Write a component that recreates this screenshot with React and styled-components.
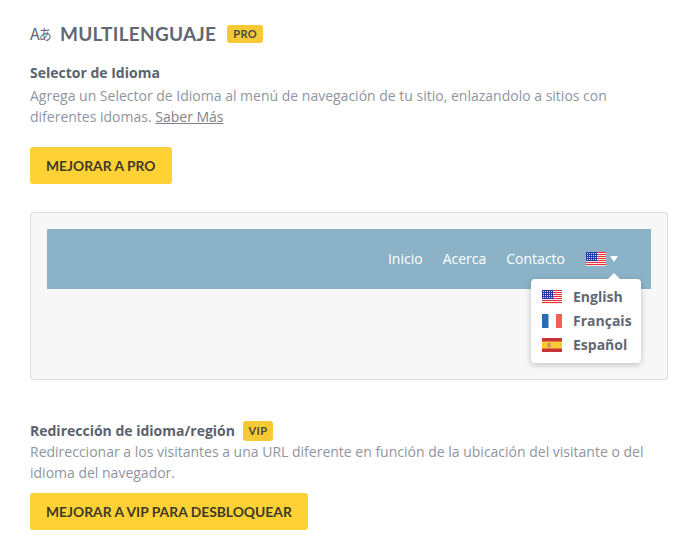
import React from 'react';
import styled, { createGlobalStyle } from 'styled-components';

const GlobalStyle = createGlobalStyle`
  html, body {
    margin: 0;
    background: #fff;
    font-family: "Open Sans", "Noto Sans", sans-serif;
  }
`;

const Page = styled.div`
  width: 693px;
  height: 550px;
  box-sizing: border-box;
  padding: 22px 25px 0 30px;
  overflow: hidden;
`;

const Header = styled.div`
  display: flex;
  align-items: center;
  height: 23px;
  margin-bottom: 18px;
`;

const Translate = styled.span`
  display: flex;
  align-items: baseline;
  width: 30px;
  color: #5f6873;
  font-size: 16px;
  line-height: 23px;
  font-family: "Noto Sans CJK JP", "Open Sans", sans-serif;
  & > small {
    font-size: 13px;
    position: relative;
    top: -1px;
    margin-left: -1px;
    transform: scaleY(1.15);
  }
`;

const Title = styled.h1`
  margin: 0 11px 0 0;
  color: #5f6873;
  font-family: Lato, sans-serif;
  font-weight: 700;
  font-size: 19px;
  line-height: 23px;
  letter-spacing: 0.28px;
`;

const Badge = styled.span`
  display: inline-block;
  padding: 0 ${(p) => (p.$large ? '5.5px' : '6px')};
  height: ${(p) => (p.$large ? '20px' : '18px')};
  line-height: ${(p) => (p.$large ? '20px' : '18px')};
  background: #f6c935;
  border-radius: 3px;
  color: #4a4a44;
  font-family: Lato, sans-serif;
  font-weight: 700;
  font-size: 11px;
  letter-spacing: 0.4px;
`;

const Subheading = styled.h2`
  display: flex;
  align-items: center;
  gap: 8px;
  margin: 0 0 ${(p) => p.$gap || 0}px;
  color: #5a626d;
  font-size: 14px;
  font-weight: 700;
  line-height: 20px;
`;

const Text = styled.p`
  margin: 0;
  color: #8f95a0;
  font-size: 14px;
  line-height: 21px;
`;

const MoreLink = styled.a`
  color: #7d838c;
  text-decoration: underline;
`;

const Button = styled.button`
  display: block;
  height: 37px;
  margin-top: ${(p) => p.$top}px;
  padding: 0 16px 2px;
  border: 0;
  border-top: 1px solid #f5cd49;
  border-radius: 3px;
  background: #fed235;
  color: #3f3a25;
  font-family: Lato, sans-serif;
  font-weight: 700;
  font-size: 13.85px;
  white-space: nowrap;
`;

const Panel = styled.div`
  box-sizing: border-box;
  width: 638px;
  height: 168px;
  margin: 28px 0 41px;
  padding: 16px;
  background: #f7f7f7;
  border: 1px solid #dcdcdc;
  border-radius: 3px;
`;

const NavBar = styled.nav`
  position: relative;
  display: flex;
  justify-content: flex-end;
  align-items: center;
  gap: 20px;
  height: 60px;
  padding: 0 33px 0 0;
  background: #8bb2c7;
`;

const NavItem = styled.span`
  color: #fff;
  font-size: 14px;
  line-height: 20px;
`;

const FlagToggle = styled.span`
  display: flex;
  align-items: center;
  gap: 4px;
  margin-left: 1px;
`;

const Caret = styled.span`
  width: 0;
  height: 0;
  border-left: 4px solid transparent;
  border-right: 4px solid transparent;
  border-top: 6px solid #fff;
`;

const Dropdown = styled.div`
  position: absolute;
  top: 50px;
  left: 484px;
  box-sizing: border-box;
  display: flex;
  flex-direction: column;
  gap: 4px;
  width: 110px;
  height: 84px;
  padding: 7px 0 0 11px;
  background: #fff;
  border-radius: 4px;
  box-shadow: 0 2px 6px rgba(0, 0, 0, 0.22);
  &::before {
    content: "";
    position: absolute;
    top: -6px;
    left: 77px;
    border-left: 6px solid transparent;
    border-right: 6px solid transparent;
    border-bottom: 6px solid #fff;
  }
`;

const Language = styled.div`
  display: flex;
  align-items: center;
  gap: 11px;
  height: 20px;
  color: #5f6873;
  font-size: 14px;
  font-weight: 700;
  & > svg {
    margin-top: 1px;
  }
`;

const stripes = [0, 2, 4, 6, 8, 10, 12];
const cantonRows = [1, 3, 5, 7];
const cantonCols = [1, 3, 5, 7, 9];

const UsFlag = () => (
  <svg width="20" height="14" viewBox="0 0 20 14">
    <rect width="20" height="14" fill="#fff" />
    {stripes.map((y) => (
      <rect key={y} y={y} width="20" height="1.1" fill="#ea2f3c" />
    ))}
    <rect width="11" height="9" fill="#2438a8" />
    {cantonRows.map((y) =>
      cantonCols.map((x) => (
        <rect key={`${x}-${y}`} x={x} y={y} width="1" height="1" fill="#d5daf2" />
      ))
    )}
  </svg>
);

const FrFlag = () => (
  <svg width="20" height="14" viewBox="0 0 20 14">
    <rect width="20" height="14" fill="#fff" />
    <rect width="6.5" height="14" fill="#2a6db0" />
    <rect x="14" width="6" height="14" fill="#f35f55" />
  </svg>
);

const EsFlag = () => (
  <svg width="20" height="14" viewBox="0 0 20 14">
    <rect width="20" height="14" fill="#c8323a" />
    <rect y="3.5" width="20" height="7" fill="#fdcb2e" />
    <rect x="5" y="5" width="4" height="4.5" rx="1" fill="#c49a6c" />
  </svg>
);

const App = () => (
  <>
    <GlobalStyle />
    <Page>
      <Header>
        <Translate>A<small>あ</small></Translate>
        <Title>MULTILENGUAJE</Title>
        <Badge>PRO</Badge>
      </Header>

      <Subheading $gap={2}>Selector de Idioma</Subheading>
      <Text>
        Agrega un Selector de Idioma al menú de navegación de tu sitio, enlazandolo a sitios con
        <br />
        diferentes idomas. <MoreLink>Saber Más</MoreLink>
      </Text>
      <Button $top={20}>MEJORAR A PRO</Button>

      <Panel>
        <NavBar>
          <NavItem>Inicio</NavItem>
          <NavItem>Acerca</NavItem>
          <NavItem>Contacto</NavItem>
          <FlagToggle>
            <UsFlag />
            <Caret />
          </FlagToggle>
          <Dropdown>
            <Language><UsFlag />English</Language>
            <Language><FrFlag />Français</Language>
            <Language><EsFlag />Español</Language>
          </Dropdown>
        </NavBar>
      </Panel>

      <Subheading>
        Redirección de idioma/región <Badge $large>VIP</Badge>
      </Subheading>
      <Text>
        Redireccionar a los visitantes a una URL diferente en función de la ubicación del visitante o del
        <br />
        idioma del navegador.
      </Text>
      <Button $top={10}>MEJORAR A VIP PARA DESBLOQUEAR</Button>
    </Page>
  </>
);

export default App;
